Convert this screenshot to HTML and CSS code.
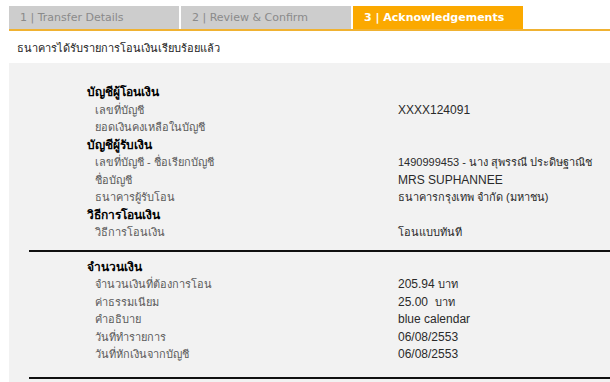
FILE: index.html
```html
<!DOCTYPE html>
<html lang="th">

<head>
    <meta charset="UTF-8">
    <title>Acknowledgements</title>
    <link rel="stylesheet" href="styles.css">
</head>

<body>
    <div class="tabs">
        <div class="tab">1 | Transfer Details</div>
        <div class="tab">2 | Review &amp; Confirm</div>
        <div class="tab active">3 | Acknowledgements</div>
    </div>

    <p class="msg">ธนาคารได้รับรายการโอนเงินเรียบร้อยแล้ว</p>

    <div class="panel">
        <div class="section">
            <div class="head">บัญชีผู้โอนเงิน</div>
            <div class="row"><span class="lbl">เลขที่บัญชี</span><span class="val">XXXX124091</span></div>
            <div class="row"><span class="lbl">ยอดเงินคงเหลือในบัญชี</span><span class="val"></span></div>
            <div class="head">บัญชีผู้รับเงิน</div>
            <div class="row"><span class="lbl">เลขที่บัญชี - ชื่อเรียกบัญชี</span><span class="val th">1490999453 - นาง สุพรรณี ประดิษฐาณิช</span></div>
            <div class="row"><span class="lbl">ชื่อบัญชี</span><span class="val">MRS SUPHANNEE</span></div>
            <div class="row"><span class="lbl">ธนาคารผู้รับโอน</span><span class="val th">ธนาคารกรุงเทพ จำกัด (มหาชน)</span></div>
            <div class="head">วิธีการโอนเงิน</div>
            <div class="row"><span class="lbl">วิธีการโอนเงิน</span><span class="val th">โอนแบบทันที</span></div>
        </div>
        <hr>
        <div class="section">
            <div class="head">จำนวนเงิน</div>
            <div class="row"><span class="lbl">จำนวนเงินที่ต้องการโอน</span><span class="val">205.94 <span class="th">บาท</span></span></div>
            <div class="row"><span class="lbl">ค่าธรรมเนียม</span><span class="val">25.00&nbsp; <span class="th">บาท</span></span></div>
            <div class="row"><span class="lbl">คำอธิบาย</span><span class="val">blue calendar</span></div>
            <div class="row"><span class="lbl">วันที่ทำรายการ</span><span class="val">06/08/2553</span></div>
            <div class="row"><span class="lbl">วันที่หักเงินจากบัญชี</span><span class="val">06/08/2553</span></div>
        </div>
        <hr class="last">
    </div>
</body>

</html>
```

FILE: styles.css
```css
* {
    margin: 0;
    padding: 0;
    box-sizing: border-box;
}

body {
    background-color: #fff;
    font-family: "DejaVu Sans", sans-serif;
    padding-left: 9px;
    overflow: hidden;
}

.tabs {
    display: flex;
    gap: 2px;
    margin-top: 6px;
    border-bottom: 2px solid #f0b232;
}

.tab {
    width: 170px;
    height: 23px;
    padding-left: 11px;
    line-height: 23px;
    font-size: 11px;
    color: #8a8a8a;
    background-color: #cdcdcd;
}

.tab.active {
    background-color: #fba900;
    color: #fff;
    font-weight: bold;
}

.msg {
    padding: 9px 0 0 8px;
    height: 32px;
    font-family: "Liberation Sans", sans-serif;
    font-size: 11px;
    line-height: 16px;
    color: #222;
}

.panel {
    background-color: #f2f2f2;
    padding-top: 21px;
    padding-bottom: 6px;
}

.section {
    padding-left: 78px;
    font-family: "Liberation Sans", sans-serif;
    font-size: 11px;
    line-height: 17.5px;
}

.head {
    font-weight: bold;
    font-size: 12px;
    color: #000;
}

.row {
    display: grid;
    grid-template-columns: 303px 1fr;
    padding-left: 8px;
}

.lbl {
    color: #5a5a5a;
}

.val {
    color: #2a2a2a;
    font-size: 12px;
    white-space: nowrap;
}

.th {
    font-size: 11px;
}

hr {
    border: none;
    border-top: 2px solid #111;
    margin: 8px 0 7px 20px;
}

hr.last {
    margin: 13px 0 0 20px;
}
```
